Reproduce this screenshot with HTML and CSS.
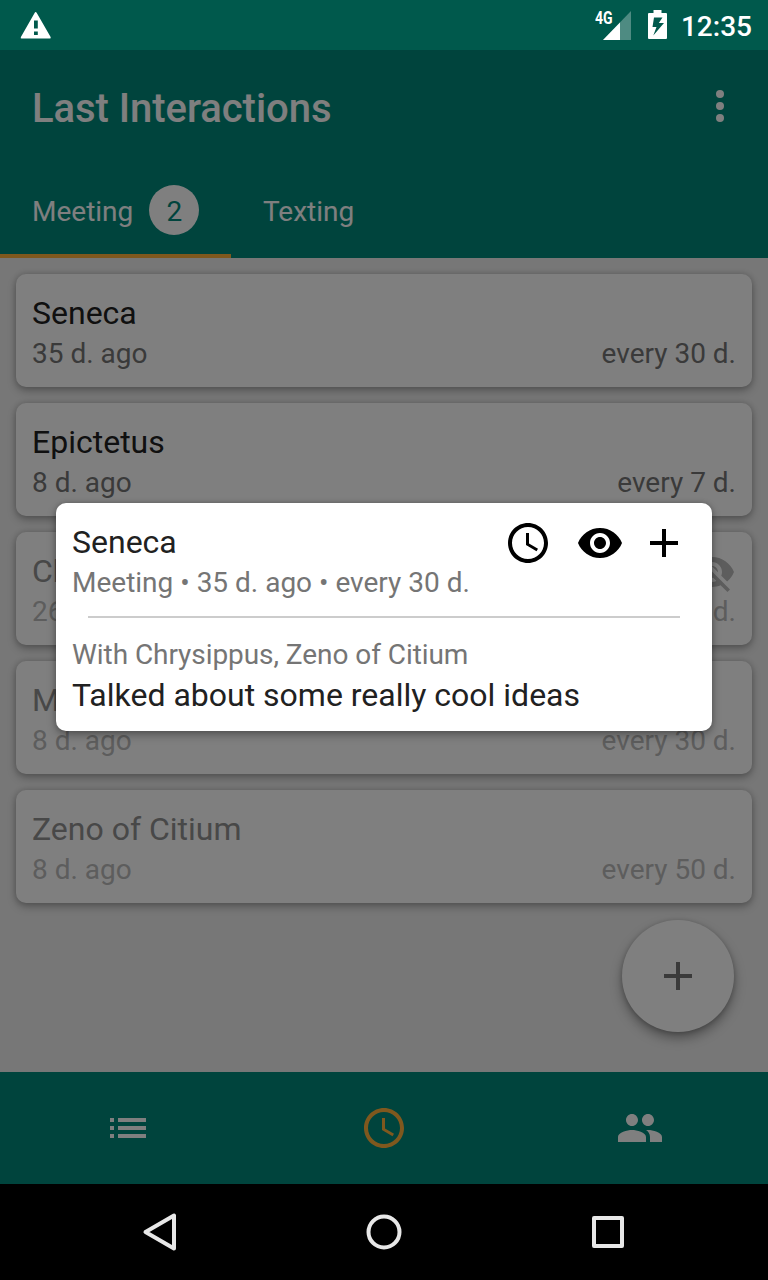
FILE: index.html
```html
<!DOCTYPE html>
<html lang="en">
<head>
<meta charset="utf-8">
<title>Last Interactions</title>
<link rel="stylesheet" href="styles.css">
</head>
<body>
<svg class="defs" aria-hidden="true">
  <symbol id="clock" viewBox="0 0 24 24"><path d="M11.99 2C6.47 2 2 6.48 2 12s4.47 10 9.99 10C17.52 22 22 17.52 22 12S17.52 2 11.99 2zM12 20c-4.42 0-8-3.58-8-8s3.58-8 8-8 8 3.58 8 8-3.58 8-8 8zm.5-13H11v6l5.25 3.15.75-1.23-4.5-2.67z"/></symbol>
  <symbol id="plus" viewBox="0 0 24 24"><path d="M19 13h-6v6h-2v-6H5v-2h6V5h2v6h6v2z"/></symbol>
</svg>
<div class="screen">
  <header class="status">
    <svg class="warn" viewBox="0 0 32 28"><path fill-rule="evenodd" d="M1.6 27.5Q.2 27.5.9 26L14.6 2q1-2 2.2 0L30.600 26q.6 1.500-.8 1.500zM14 9.500v8h3.800v-8zM14 20.500v3.600h3.800v-3.600z"/></svg>
    <div class="status-right">
      <div class="signal">
        <svg viewBox="0 0 28 29"><path class="faint" d="M28 0v29H0z"/><path d="M17 11.500V29H0z"/></svg>
        <span class="net">4G</span>
      </div>
      <svg class="battery" viewBox="0 0 19 29"><path fill-rule="evenodd" d="M5.500 0h8v3H18Q19 3 19 4V28Q19 29 18 29H1Q0 29 0 28V4Q0 3 1 3h4.500zM6 7.500L4.500 17h4L5.300 25.500 16 13h-5.200L14.500 7.500z"/></svg>
      <span class="time">12:35</span>
    </div>
  </header>
  <div class="app">
    <div class="toolbar">
      <h1>Last Interactions</h1>
      <svg class="icon" viewBox="0 0 24 24"><circle cx="12" cy="5" r="2"/><circle cx="12" cy="11" r="2"/><circle cx="12" cy="17" r="2"/></svg>
    </div>
    <nav class="tabs">
      <div class="tab active"><span>Meeting</span><span class="badge">2</span></div>
      <div class="tab"><span>Texting</span></div>
    </nav>
    <main class="list">
      <article class="card"><h2>Seneca</h2><p><span>35 d. ago</span><span>every 30 d.</span></p></article>
      <article class="card"><h2>Epictetus</h2><p><span>8 d. ago</span><span>every 7 d.</span></p></article>
      <article class="card muted"><h2>Chrysippus</h2><p><span>26 d. ago</span><span>every 30 d.</span></p>
        <svg class="icon hidden-mark" viewBox="0 0 24 24"><path d="M12 7c2.760 0 5 2.240 5 5 0 .650-.130 1.260-.360 1.830l2.920 2.920c1.510-1.260 2.700-2.890 3.430-4.750-1.730-4.390-6-7.500-11-7.500-1.400 0-2.740.250-3.980.700l2.160 2.160C10.740 7.130 11.350 7 12 7zM2 4.270l2.280 2.280.460.460C3.080 8.300 1.780 10.020 1 12c1.730 4.390 6 7.500 11 7.500 1.550 0 3.030-.300 4.380-.840l.420.420L19.730 22 21 20.730 3.270 3 2 4.270zM7.530 9.800l1.550 1.550c-.050.210-.080.430-.080.650 0 1.660 1.340 3 3 3 .220 0 .440-.030.650-.080l1.550 1.550c-.670.330-1.410.530-2.200.530-2.760 0-5-2.240-5-5 0-.790.200-1.530.530-2.200zm4.310-.780l3.150 3.150.020-.160c0-1.660-1.340-3-3-3l-.170.010z"/></svg>
      </article>
      <article class="card muted"><h2>Marcus Aurelius</h2><p><span>8 d. ago</span><span>every 30 d.</span></p></article>
      <article class="card muted"><h2>Zeno of Citium</h2><p><span>8 d. ago</span><span>every 50 d.</span></p></article>
      <div class="fab"><svg class="icon"><use href="#plus"/></svg></div>
    </main>
    <nav class="bottom">
      <svg class="icon" viewBox="0 0 24 24"><path d="M3 13h2v-2H3zM3 17h2v-2H3zM3 9h2V7H3zM7 13h14v-2H7zM7 17h14v-2H7zM7 7v2h14V7z"/></svg>
      <svg class="icon selected"><use href="#clock"/></svg>
      <svg class="icon" viewBox="0 0 24 24"><path d="M16 11c1.660 0 2.990-1.340 2.990-3S17.660 5 16 5s-3 1.340-3 3 1.340 3 3 3zm-8 0c1.660 0 2.990-1.340 2.990-3S9.660 5 8 5 5 6.340 5 8s1.340 3 3 3zm0 2c-2.330 0-7 1.170-7 3.500V19h14v-2.500c0-2.330-4.670-3.500-7-3.500zm8 0c-.290 0-.620.020-.970.050 1.160.840 1.970 1.970 1.970 3.450V19h6v-2.500c0-2.330-4.670-3.500-7-3.500z"/></svg>
    </nav>
    <div class="scrim">
      <section class="dialog">
        <div class="dialog-head">
          <h2>Seneca</h2>
          <div class="actions">
            <svg class="icon"><use href="#clock"/></svg>
            <svg class="icon" viewBox="0 0 24 24"><path d="M12 4.500C7 4.500 2.730 7.610 1 12c1.730 4.390 6 7.500 11 7.500s9.270-3.110 11-7.500c-1.730-4.390-6-7.500-11-7.500zM12 17c-2.760 0-5-2.240-5-5s2.240-5 5-5 5 2.240 5 5-2.240 5-5 5zm0-8c-1.660 0-3 1.340-3 3s1.340 3 3 3 3-1.340 3-3-1.340-3-3-3z"/></svg>
            <svg class="icon plus"><use href="#plus"/></svg>
          </div>
        </div>
        <p>Meeting • 35 d. ago • every 30 d.</p>
        <hr>
        <p class="people">With Chrysippus, Zeno of Citium</p>
        <h2>Talked about some really cool ideas</h2>
      </section>
    </div>
  </div>
  <footer class="system">
    <svg class="icon" viewBox="0 0 48 48"><path d="M38 7.500v33L9.500 24z"/></svg>
    <svg class="icon" viewBox="0 0 48 48"><circle cx="24" cy="24" r="15.500"/></svg>
    <svg class="icon" viewBox="0 0 48 48"><rect x="10" y="10" width="28" height="28"/></svg>
  </footer>
</div>
</body>
</html>
```
FILE: styles.css
```css
* { box-sizing: border-box; }
body { margin: 0; font-family: Roboto, "Liberation Sans", sans-serif; }
h1, h2, p { margin: 0; font-weight: 400; white-space: nowrap; }
.defs { position: absolute; width: 0; height: 0; }
.screen { width: 768px; height: 1280px; display: flex; flex-direction: column; overflow: hidden; }
.icon { display: block; width: 48px; height: 48px; flex: none; fill: currentColor; }

.status { height: 50px; flex: none; background: #00594c; color: #fff; display: flex; align-items: flex-start; justify-content: space-between; padding: 0 16px 0 20px; }
.status svg { display: block; fill: #fff; }
.warn { width: 32px; height: 28px; margin-top: 11px; }
.status-right { display: flex; align-items: flex-start; }
.signal { position: relative; margin: 11px 17px 0 0; }
.signal svg { width: 28px; height: 29px; }
.signal .faint { fill: #4e8b82; }
.net { position: absolute; left: -8px; top: -3px; font-size: 18px; line-height: 20px; font-weight: 700; transform: scaleX(.78); transform-origin: left; }
.battery { width: 19px; height: 29px; margin: 10px 14px 0 0; }
.time { font-size: 28px; line-height: 33px; font-weight: 500; margin-top: 10px; }

.app { position: relative; flex: 1; display: flex; flex-direction: column; background: #eee; }
.toolbar { height: 112px; flex: none; background: #00897b; color: #fff; display: flex; align-items: center; justify-content: space-between; padding: 4px 24px 0 32px; }
.toolbar h1 { font-size: 40px; line-height: 48px; font-weight: 500; letter-spacing: -.05px; padding-top: 2px; }
.tabs { height: 96px; flex: none; display: flex; background: #00897b; color: #fff; font-size: 28px; }
.tab { display: flex; align-items: center; gap: 16px; padding: 6px 32px 0; border-bottom: 4px solid transparent; }
.tab.active { width: 231px; border-color: #ffb03c; }
.badge { flex: none; width: 50px; height: 50px; border-radius: 50%; background: #fff; color: #00897b; text-align: center; line-height: 53px; margin-top: -3px; }

.list { position: relative; flex: 1; display: flex; flex-direction: column; gap: 16px; padding: 16px; }
.card { position: relative; height: 113px; flex: none; background: #fff; border-radius: 10px; padding: 18px 16px 14px; box-shadow: 0 4px 8px rgba(0,0,0,.25), 0 0 6px rgba(0,0,0,.18); }
.card h2, .dialog h2 { font-size: 32px; line-height: 43px; color: #212121; }
.card p, .dialog p { font-size: 28px; line-height: 38px; color: #757575; }
.card p { display: flex; justify-content: space-between; }
.muted h2 { color: #909090; }
.muted p { color: #bababa; }
.hidden-mark { position: absolute; right: 16px; top: 16px; color: #bababa; }
.fab { position: absolute; right: 34px; bottom: 40px; width: 112px; height: 112px; border-radius: 50%; background: #fff; color: #757575; display: flex; align-items: center; justify-content: center; box-shadow: 0 6px 12px rgba(0,0,0,.35), 0 1px 5px rgba(0,0,0,.2); }

.bottom { height: 112px; flex: none; background: #00897b; color: #fff; display: grid; grid-template-columns: repeat(3, 1fr); place-items: center; }
.selected { color: #ffb03c; }

.scrim { position: absolute; inset: 0; background: rgba(0,0,0,.5); display: flex; align-items: center; justify-content: center; }
.dialog { width: 656px; height: 228px; background: #fff; border-radius: 10px; padding: 18px 16px 13px; box-shadow: 0 4px 10px rgba(0,0,0,.3), 0 0 5px rgba(0,0,0,.2); }
.dialog-head { display: flex; justify-content: space-between; height: 43px; }
.actions { display: flex; gap: 24px; margin-top: -2px; padding-right: 8px; color: #000; }
.actions .plus { margin-left: -8px; }
.dialog hr { border: 0; height: 2px; background: #ccc; margin: 14px 16px 18px; }
.dialog .people { letter-spacing: -.06px; }

.system { height: 96px; flex: none; background: #000; display: flex; align-items: center; justify-content: center; gap: 176px; }
.system .icon { fill: none; stroke: #e8e8e8; stroke-width: 4; stroke-linejoin: round; }
```
